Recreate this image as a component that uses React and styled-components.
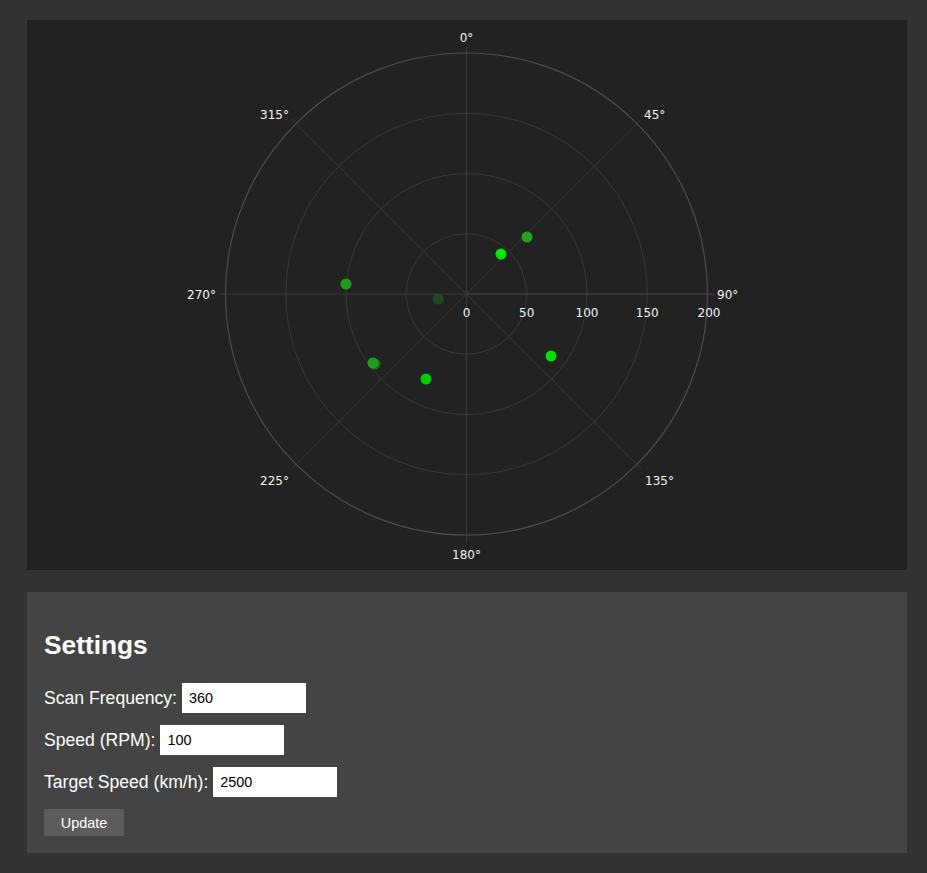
import styled, { createGlobalStyle } from "styled-components";

const GlobalStyle = createGlobalStyle`
	body {
		margin: 0;
		background: #333;
		font-family: "Liberation Sans", Arial, sans-serif;
		color: #fff;
	}
`;

const Page = styled.div`
	padding: 20px 20px 20px 27px;
	width: 880px;
`;

const ChartPanel = styled.div`
	width: 880px;
	height: 550px;
	background: #222;
	margin-bottom: 22px;
`;

const Settings = styled.div`
	background: #444;
	padding: 16px 16px 17px 17px;
`;

const Title = styled.h2`
	margin: 22px 0 23px;
	font-size: 26.3px;
	font-weight: bold;
	line-height: 30px;
`;

const Row = styled.div`
	display: flex;
	align-items: center;
	gap: 5px;
	height: 30px;
	margin-bottom: 12px;
	font-size: 17.6px;
`;

const Input = styled.input`
	box-sizing: border-box;
	width: 124px;
	height: 30px;
	border: none;
	background: #fff;
	padding: 0 7px;
	font-family: "Liberation Sans", Arial, sans-serif;
	font-size: 14.4px;
	color: #000;
	outline: none;
`;

const Button = styled.button`
	display: block;
	width: 80px;
	height: 27px;
	border: none;
	background: #5c5c5c;
	color: #fff;
	font-family: "Liberation Sans", Arial, sans-serif;
	font-size: 14.4px;
	padding: 0;
`;

// chart geometry
const CX = 439.5;
const CY = 274;
const R = 241;
const K = R / 200;

const angleLabels = [
	{ t: "0°", x: CX, y: 22, a: "middle" },
	{ t: "45°", x: 617, y: 99, a: "start" },
	{ t: "90°", x: 690, y: 279, a: "start" },
	{ t: "135°", x: 618, y: 465, a: "start" },
	{ t: "180°", x: CX, y: 539, a: "middle" },
	{ t: "225°", x: 262, y: 465, a: "end" },
	{ t: "270°", x: 189, y: 279, a: "end" },
	{ t: "315°", x: 262, y: 99, a: "end" },
];

const points = [
	{ x: 500, y: 217, c: "#22a322" },
	{ x: 474, y: 234, c: "#00e800" },
	{ x: 411, y: 279, c: "#1f4b1f" },
	{ x: 319, y: 264, c: "#1c9e1c" },
	{ x: 348, y: 344, c: "#1a6a1a" },
	{ x: 346, y: 343, c: "#1c9e1c" },
	{ x: 399, y: 359, c: "#00cc00" },
	{ x: 524, y: 336, c: "#00e000" },
];

function Radar() {
	let spokes = [0, 45, 90, 135, 180, 225, 270, 315];
	return (
		<svg width="880" height="550">
			{[50, 100, 150].map((v) => (
				<circle key={v} cx={CX} cy={CY} r={v * K} fill="none" stroke="#383838" strokeWidth="1" />
			))}
			{spokes.map((d) => {
				let rad = (d * Math.PI) / 180;
				return (
					<line
						key={d}
						x1={CX}
						y1={CY}
						x2={CX + Math.sin(rad) * (R + 6)}
						y2={CY - Math.cos(rad) * (R + 6)}
						stroke={d == 90 ? "#4a4a4a" : "#393939"}
						strokeWidth="1"
					/>
				);
			})}
			<circle cx={CX} cy={CY} r={R} fill="none" stroke="#4c4c4c" strokeWidth="1.2" />
			{angleLabels.map((l) => (
				<text key={l.t} x={l.x} y={l.y} textAnchor={l.a} fill="#f2f2f2" fontSize="12" fontFamily="DejaVu Sans, Verdana, sans-serif">
					{l.t}
				</text>
			))}
			{[0, 50, 100, 150, 200].map((v) => (
				<text key={v} x={CX + v * K + (v == 200 ? 1.5 : 0)} y={297} textAnchor="middle" fill="#f2f2f2" fontSize="12" fontFamily="DejaVu Sans, Verdana, sans-serif">
					{v}
				</text>
			))}
			{points.map((p, i) => (
				<circle key={i} cx={p.x} cy={p.y} r="5.5" fill={p.c} />
			))}
		</svg>
	);
}

export default function App() {
	return (
		<Page>
			<GlobalStyle />
			<ChartPanel>
				<Radar />
			</ChartPanel>
			<Settings>
				<Title>Settings</Title>
				<Row>
					<label>Scan Frequency:</label>
					<Input defaultValue="360" />
				</Row>
				<Row>
					<label>Speed (RPM):</label>
					<Input defaultValue="100" />
				</Row>
				<Row>
					<label>Target Speed (km/h):</label>
					<Input defaultValue="2500" />
				</Row>
				<Button>Update</Button>
			</Settings>
		</Page>
	);
}
